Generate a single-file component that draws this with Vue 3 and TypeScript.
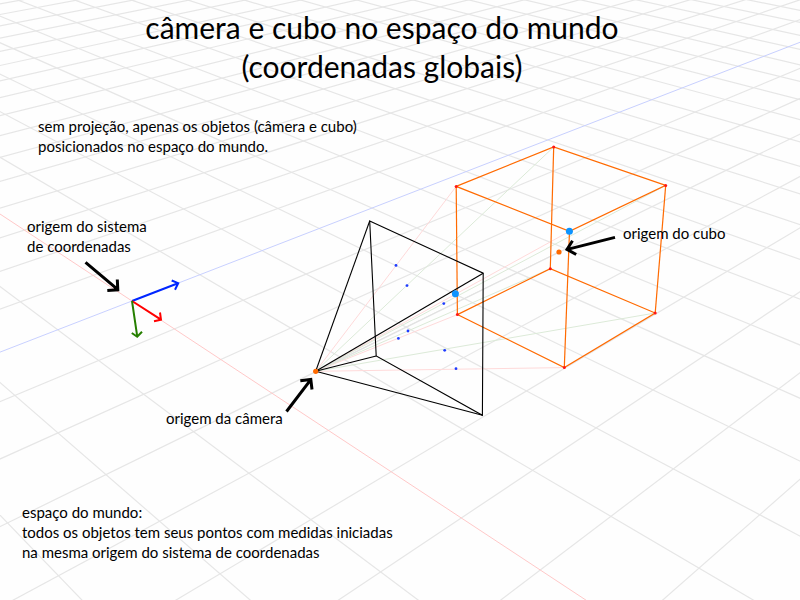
<script setup lang="ts">
type Point = [number, number]
type Segment = { x1: number; y1: number; x2: number; y2: number }

// Floor plane to screen: n runs along the red axis, m along the blue one.
const floor = { x: [132, 34.79, 76.96], y: [301, 13.6, -13.75], w: [1, -0.04356, 0.0456] }
const NEAR = 0.3
const FAR = 60

const combine = (k: number[], n: number, m: number) => k[0] + k[1] * n + k[2] * m

function project(n: number, m: number): Point {
  const w = combine(floor.w, n, m)
  return [combine(floor.x, n, m) / w, combine(floor.y, n, m) / w]
}

const segment = ([x1, y1]: Point, [x2, y2]: Point): Segment => ({ x1, y1, x2, y2 })

// Line of constant n, cut where it comes too near the viewer.
function alongBlue(n: number): Segment {
  const start = (NEAR - 1 - floor.w[1] * n) / floor.w[2]
  return segment(project(n, start), project(n, FAR))
}

// Line of constant m, cut the same way.
function alongRed(m: number): Segment {
  const end = (NEAR - 1 - floor.w[2] * m) / floor.w[1]
  return segment(project(-FAR, m), project(end, m))
}

const range = (from: number, to: number) => Array.from({ length: to - from + 1 }, (_, i) => from + i)

const gridLines: Segment[] = [
  ...range(-40, 24).filter((n) => n !== 0).map(alongBlue),
  ...range(-12, 44).filter((m) => m !== 0).map(alongRed),
]
const redAxis = alongRed(0)
const blueAxis = alongBlue(0)

const camera: Point = [315.7, 371.3]
const frame: Point[] = [[369.7, 221], [483.2, 273.2], [482.4, 415.3], [376.2, 356]]
const top: Point[] = [[456.2, 186.4], [553.7, 147], [665.7, 185.4], [569.5, 231.3]]
const bottom: Point[] = [[457.4, 314.6], [550.3, 268.7], [655.2, 313], [564.3, 367.6]]
const cubeCenter: Point = [559, 252]

const pointList = (points: Point[]) => points.map((p) => p.join(',')).join(' ')
const pillars = top.map((p, i) => segment(p, bottom[i]))
const cameraEdges = frame.map((p) => segment(camera, p))
const redRays = [top[0], top[3], bottom[0], bottom[3]].map((p) => segment(camera, p))
const greenRays = [top[1], top[2], bottom[1], bottom[2]].map((p) => segment(camera, p))
const centerRay = segment(camera, cubeCenter)
const corners: Point[] = [...top, ...bottom]
const projected: Point[] = [
  [396, 265.4], [407, 285.6], [443.8, 303.6], [408, 331], [398.4, 338.4], [444.7, 350.3], [456, 368.7],
]
const highlights: Point[] = [[569.4, 231.3], [455.4, 293.7]]
</script>

<template>
  <main class="stage">
    <svg class="scene" viewBox="0 0 800 600" aria-hidden="true">
      <g class="grid">
        <line v-for="(l, i) in gridLines" :key="i" v-bind="l" />
      </g>
      <line class="axis-red" v-bind="redAxis" />
      <line class="axis-blue" v-bind="blueAxis" />

      <line v-for="(l, i) in redRays" :key="'r' + i" class="ray-red" v-bind="l" />
      <line v-for="(l, i) in greenRays" :key="'g' + i" class="ray-green" v-bind="l" />
      <line class="ray-gray" v-bind="centerRay" />

      <g class="cube">
        <polygon :points="pointList(top)" />
        <polygon :points="pointList(bottom)" />
        <line v-for="(l, i) in pillars" :key="i" v-bind="l" />
      </g>
      <g class="corner">
        <circle v-for="(p, i) in corners" :key="i" :cx="p[0]" :cy="p[1]" r="1.5" />
      </g>

      <g class="pyramid">
        <polygon :points="pointList(frame)" />
        <line v-for="(l, i) in cameraEdges" :key="i" v-bind="l" />
      </g>
      <g class="projected">
        <circle v-for="(p, i) in projected" :key="i" :cx="p[0]" :cy="p[1]" r="1.4" />
      </g>
      <g class="highlight">
        <circle v-for="(p, i) in highlights" :key="i" :cx="p[0]" :cy="p[1]" r="3.5" />
      </g>
      <g class="origin">
        <circle :cx="camera[0]" :cy="camera[1]" r="2.6" />
        <circle :cx="cubeCenter[0]" :cy="cubeCenter[1]" r="2.6" />
      </g>

      <g class="vector">
        <path class="blue" d="M132 301 178 283.3M171.7 280.5 178.2 283.2 175 289.7" />
        <path class="red" d="M132 301 160.6 319.4M160 312.5 161 319.8 154 321.2" />
        <path class="green" d="M132 301 137.2 336.2M131.8 333 137.2 336.8 142 331.7" />
      </g>
      <g class="pointer">
        <path d="M85.5 262.3 117.3 289.2M117.3 279.5 117.8 289.8 107.3 290.5" />
        <path d="M286.5 411.5 310.6 379.8M300.3 380.7 310.8 379.4 312 389.5" />
        <path d="M615 237.4 567.4 249.4M572.5 240.8 567 249.4 576.2 254.5" />
      </g>
    </svg>

    <header class="head">
      <h1>câmera e cubo no espaço do mundo<br />(coordenadas globais)</h1>
      <p class="intro">sem projeção, apenas os objetos (câmera e cubo)<br />posicionados no espaço do mundo.</p>
    </header>

    <p class="label world">origem do sistema<br />de coordenadas</p>
    <p class="label cube-label">origem do cubo</p>
    <p class="label camera-label">origem da câmera</p>

    <footer class="note">
      <p>espaço do mundo:<br />todos os objetos tem seus pontos com medidas iniciadas<br />na mesma origem do sistema de coordenadas</p>
    </footer>
  </main>
</template>

<style>
body {
  background: #fefefe;
}
</style>

<style scoped>
.stage {
  position: relative;
  display: flex;
  flex-direction: column;
  justify-content: space-between;
  box-sizing: border-box;
  width: 100%;
  aspect-ratio: 4 / 3;
  overflow: hidden;
  color: #000;
  font: 15px/20px Lato, "Open Sans", sans-serif;
}
.scene {
  position: absolute;
  inset: 0;
  width: 100%;
  height: 100%;
  fill: none;
}
.grid { stroke: #e6e6e6; stroke-width: 1.2; }
.axis-red { stroke: #ffc8c8; }
.axis-blue { stroke: #c8d0ff; }
.ray-red { stroke: #ffdada; }
.ray-green { stroke: #dcead8; }
.ray-gray { stroke: #e2e2e2; }
.cube { stroke: #ff6a00; stroke-width: 1.2; }
.corner { fill: #ff1616; }
.pyramid { stroke: #000; stroke-width: 1.1; }
.projected { fill: #1f3cff; }
.highlight { fill: #0c94ff; }
.origin { fill: #ff6a00; }
.vector { stroke-width: 2; }
.blue { stroke: #0026ff; }
.red { stroke: #ff0000; }
.green { stroke: #267f00; }
.pointer { stroke: #000; stroke-width: 3; }

h1,
p {
  margin: 0;
}
.head {
  position: relative;
  padding: 8px 0;
}
h1 {
  padding-right: 36px;
  font-size: 30px;
  font-weight: 400;
  line-height: 39px;
  text-align: center;
}
.intro {
  padding: 30px 38px;
}
.label {
  position: absolute;
  white-space: nowrap;
}
.world {
  left: 3.375%;
  top: 36%;
}
.cube-label {
  left: 77.875%;
  top: 37.2%;
}
.camera-label {
  left: 20.75%;
  top: 68%;
}
.note {
  position: relative;
  padding: 0 22px 38px;
}
</style>
